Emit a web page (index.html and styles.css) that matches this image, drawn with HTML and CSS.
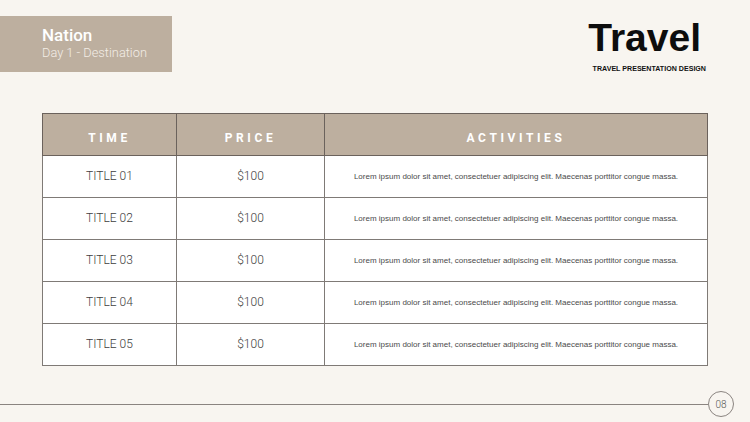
FILE: index.html
```html
<!DOCTYPE html>
<html>
<head>
<meta charset="utf-8">
<link rel="stylesheet" href="styles.css">
</head>
<body>
<div class="slide">
  <header class="top">
    <div class="tag">
      <div class="tag-title">Nation</div>
      <div class="tag-sub">Day 1 - Destination</div>
    </div>
    <div class="brand">
      <div class="brand-title">Travel</div>
      <div class="brand-sub">TRAVEL PRESENTATION DESIGN</div>
    </div>
  </header>
  <table class="sched">
    <thead>
      <tr><th class="c-time">TIME</th><th class="c-price">PRICE</th><th class="c-act">ACTIVITIES</th></tr>
    </thead>
    <tbody>
      <tr><td>TITLE 01</td><td>$100</td><td class="lorem">Lorem ipsum dolor sit amet, consectetuer adipiscing elit. Maecenas porttitor congue massa.</td></tr>
      <tr><td>TITLE 02</td><td>$100</td><td class="lorem">Lorem ipsum dolor sit amet, consectetuer adipiscing elit. Maecenas porttitor congue massa.</td></tr>
      <tr><td>TITLE 03</td><td>$100</td><td class="lorem">Lorem ipsum dolor sit amet, consectetuer adipiscing elit. Maecenas porttitor congue massa.</td></tr>
      <tr><td>TITLE 04</td><td>$100</td><td class="lorem">Lorem ipsum dolor sit amet, consectetuer adipiscing elit. Maecenas porttitor congue massa.</td></tr>
      <tr><td>TITLE 05</td><td>$100</td><td class="lorem">Lorem ipsum dolor sit amet, consectetuer adipiscing elit. Maecenas porttitor congue massa.</td></tr>
    </tbody>
  </table>
  <footer class="foot">
    <div class="rule"></div>
    <div class="page">08</div>
  </footer>
</div>
</body>
</html>
```

FILE: styles.css
```css
* { box-sizing: border-box; }
html, body { margin: 0; padding: 0; }
body {
  width: 750px;
  height: 422px;
  background: #f8f5f0;
  font-family: Roboto, "Liberation Sans", sans-serif;
  overflow: hidden;
}
.slide {
  width: 750px;
  height: 422px;
  display: flex;
  flex-direction: column;
}
.top {
  display: flex;
  justify-content: space-between;
  align-items: flex-start;
  height: 113px;
  padding-top: 16px;
}
.tag {
  width: 172px;
  height: 56px;
  background: #bdaf9f;
  padding: 9px 0 0 42px;
  color: #fff;
}
.tag-title {
  font-size: 17px;
  font-weight: 500;
  line-height: 20px;
}
.tag-sub {
  font-size: 12.8px;
  font-weight: 300;
  line-height: 16px;
  color: #f3ede6;
}
.brand {
  width: 170px;
  margin-right: 44px;
  display: flex;
  flex-direction: column;
  align-items: flex-end;
}
.brand-title {
  font-family: "Liberation Sans", Arial, sans-serif;
  font-weight: 700;
  font-size: 39px;
  line-height: 44px;
  color: #0d0d0d;
  margin-right: 5px;
}
.brand-sub {
  font-family: "Liberation Sans", Arial, sans-serif;
  font-weight: 700;
  font-size: 7.1px;
  color: #111;
  margin-top: 5px;
  margin-right: 0;
}
.sched {
  margin-left: 42px;
  width: 666px;
  border-collapse: collapse;
  background: #fff;
}
.sched th, .sched td {
  border: 1px solid #7f7a76;
  text-align: center;
  padding: 0;
}
.sched th {
  background: #bdaf9f;
  color: #fff;
  font-weight: 700;
  font-size: 12px;
  letter-spacing: 3.6px;
  height: 42px;
  padding-top: 7px;
  border-color: #6b625c;
}
.c-time { width: 134px; }
.c-price { width: 148px; }
.sched td {
  height: 42px;
  font-size: 12px;
  font-weight: 300;
  color: #3d3d3d;
  padding-bottom: 1px;
}
.sched td.lorem {
  font-family: "Liberation Sans", Arial, sans-serif;
  font-size: 8px;
  font-weight: 400;
  color: #4a4a4a;
}
.foot {
  margin-top: 25px;
  height: 26px;
  display: flex;
  align-items: center;
}
.rule {
  width: 708px;
  height: 1px;
  background: #8a8480;
}
.page {
  width: 26px;
  height: 26px;
  border: 1px solid #8a8480;
  border-radius: 50%;
  display: flex;
  align-items: center;
  justify-content: center;
  font-size: 10px;
  font-weight: 300;
  color: #555;
}
```
